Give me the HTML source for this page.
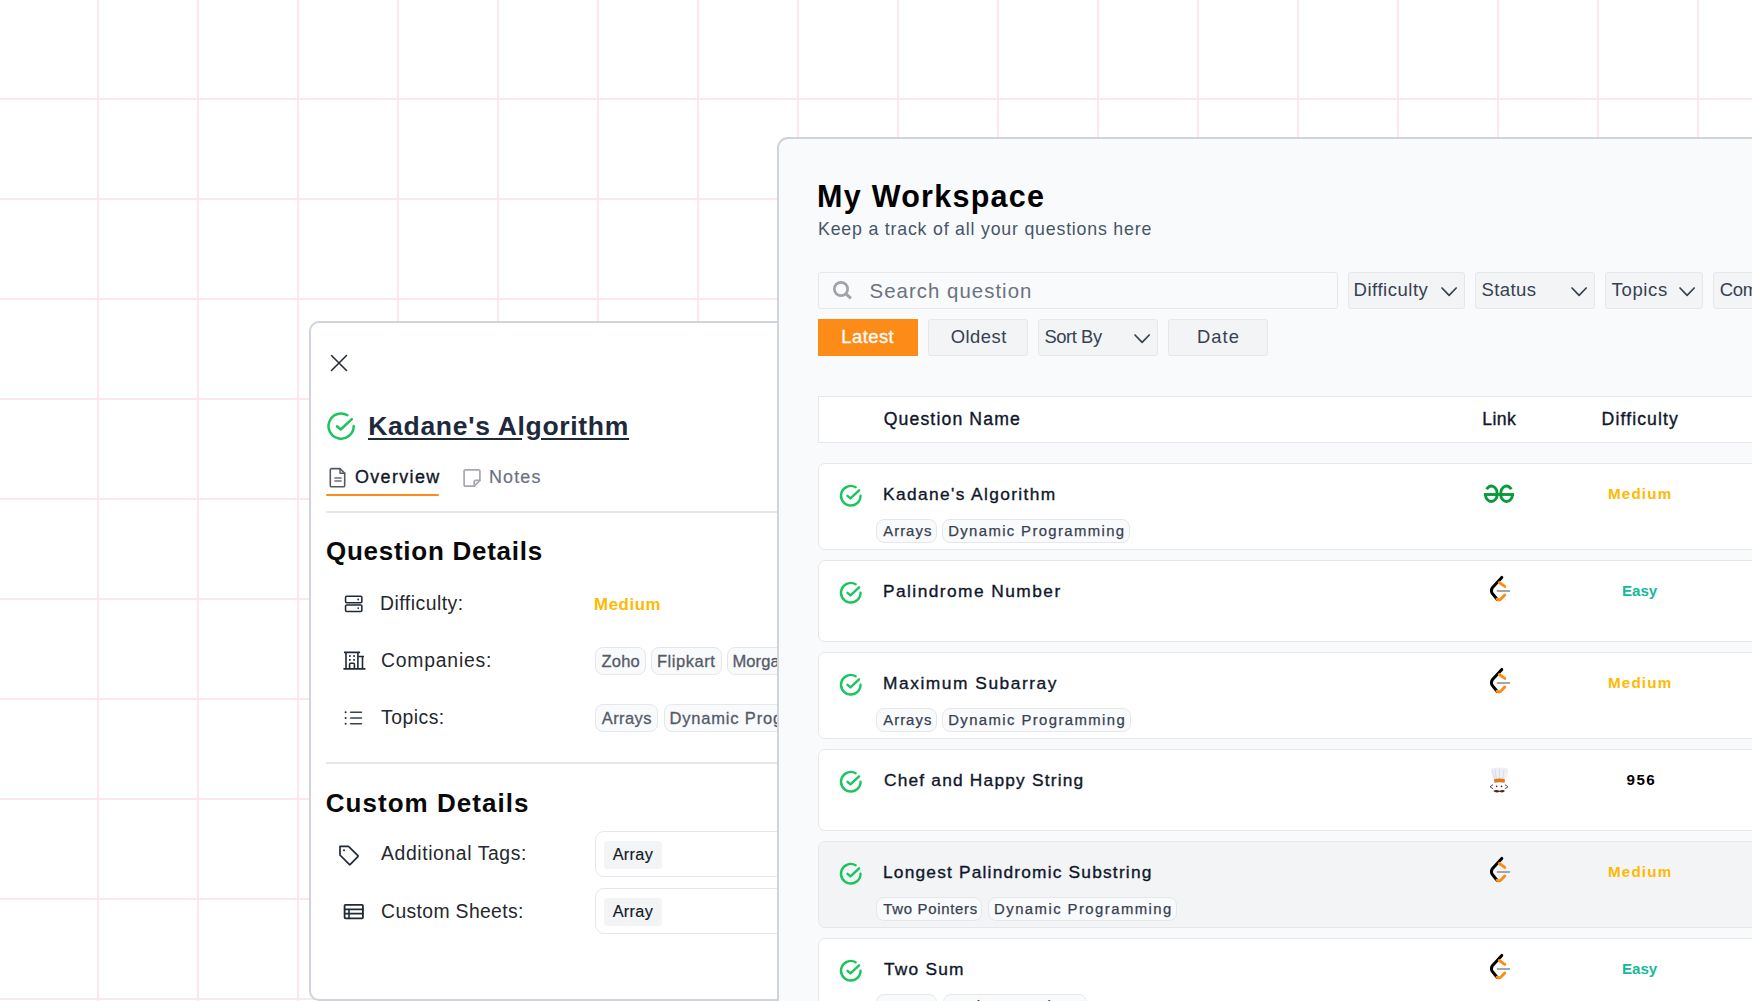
<!DOCTYPE html>
<html><head><meta charset="utf-8"><title>My Workspace</title>
<style>
html,body{margin:0;padding:0;}
body{width:1752px;height:1001px;overflow:hidden;position:relative;background-color:#fff;
background-image:linear-gradient(to right, transparent 97px, #fde7ee 97px, #fde7ee 99px, transparent 99px),
linear-gradient(to bottom, transparent 98px, #fde7ee 98px, #fde7ee 100px, transparent 100px);
background-size:100px 100%, 100% 100px;background-repeat:repeat-x, repeat-y;
font-family:"Liberation Sans", sans-serif;}
.b{position:absolute;}
.i{position:absolute;overflow:visible;}
.t{position:absolute;white-space:pre;line-height:1;font-family:"Liberation Sans", sans-serif;}
#modal,#panel{position:absolute;left:0;top:0;width:1752px;height:1001px;}
</style></head><body>
<div id="modal">
<div class="b" style="left:309px;top:321px;width:700px;height:680px;border:2px solid #cfd4dc;border-radius:10px;background:#fff;box-sizing:border-box"></div>
<svg class="i" style="left:326px;top:350px;" width="26" height="26" viewBox="0 0 26 26" fill="none" stroke-linecap="round" stroke-linejoin="round"><path d="M5.5 5.5 L20.5 20.5 M20.5 5.5 L5.5 20.5" stroke="#272c34" stroke-width="1.55"/></svg>
<svg class="i" style="left:326.38px;top:411.28px;" width="30.24" height="30.24" viewBox="0 0 24 24" fill="none" stroke-linecap="round" stroke-linejoin="round"><path d="M22 12A10 10 0 1 1 17 3.34" stroke="#1bc55d" stroke-width="1.984"/><path d="M8.7 12.1L11.7 14.7L20.5 6.4" stroke="#1bc55d" stroke-width="1.984"/></svg>
<div class="b" style="left:368px;top:437.8px;width:153.5px;height:2px;background:#1e293b"></div>
<div class="b" style="left:540.6px;top:437.8px;width:88.4px;height:2px;background:#1e293b"></div>
<svg class="i" style="left:328px;top:467px;" width="19" height="21" viewBox="0 0 19 21" fill="none" stroke-linecap="round" stroke-linejoin="round"><path d="M2.3 3Q2.3 1.6 3.7 1.6H12L16.7 6.3V18.4Q16.7 19.8 15.3 19.8H3.7Q2.3 19.8 2.3 18.4Z" stroke="#535a64" stroke-width="1.6"/><path d="M12 1.6V6.3H16.7" stroke="#535a64" stroke-width="1.4"/><path d="M7 11H13 M7 14H13" stroke="#6b7079" stroke-width="1.7"/></svg>
<svg class="i" style="left:462px;top:468px;" width="20" height="20" viewBox="0 0 20 20" fill="none" stroke-linecap="round" stroke-linejoin="round"><path d="M12.2 18.2H3.3Q2.1 18.2 2.1 17V3Q2.1 1.8 3.3 1.8H16.7Q17.9 1.8 17.9 3V12.5Z" stroke="#a5a8ad" stroke-width="1.7"/><path d="M12.2 18.2V13.7Q12.2 12.4 13.5 12.4H17.9" stroke="#a5a8ad" stroke-width="1.7"/></svg>
<div class="b" style="left:326px;top:494px;width:113.2px;height:2px;background:#fb8c1a;border-radius:1px"></div>
<div class="b" style="left:326px;top:511px;width:460px;height:2px;background:#e5e7eb"></div>
<div class="b" style="left:326px;top:762px;width:460px;height:2px;background:#e5e7eb"></div>
<svg class="i" style="left:343px;top:594px;" width="21" height="19" viewBox="0 0 21 19" fill="none" stroke-linecap="round" stroke-linejoin="round"><rect x="2.55" y="2.2" width="16.3" height="6.5" rx="1.2" stroke="#1f2937" stroke-width="1.55"/><rect x="2.55" y="10.9" width="16.3" height="6.5" rx="1.2" stroke="#1f2937" stroke-width="1.55"/><circle cx="15.2" cy="5.5" r="0.9" fill="#1f2937"/><circle cx="15.2" cy="14.1" r="0.9" fill="#1f2937"/></svg>
<svg class="i" style="left:340px;top:645px;" width="28" height="28" viewBox="0 0 28 28" fill="none" stroke-linecap="round" stroke-linejoin="round"><path d="M4.2 23.9H24.6 M6 23.9V7.4 M4.8 7.4H19.3 M17.9 7.4V23.9 M17.9 11.5H23.2 M22.5 11.5V23.9 M9.6 23.9V19.3Q9.6 18.3 10.6 18.3H13.4Q14.4 18.3 14.4 19.3V23.9" stroke="#1f2937" stroke-width="1.6" stroke-linecap="square"/><rect x="9" y="10.2" width="1.7" height="1.7" fill="#1f2937"/><rect x="13.2" y="10.2" width="1.7" height="1.7" fill="#1f2937"/><rect x="9" y="14" width="1.7" height="1.7" fill="#1f2937"/><rect x="13.2" y="14" width="1.7" height="1.7" fill="#1f2937"/></svg>
<svg class="i" style="left:342px;top:708px;" width="22" height="20" viewBox="0 0 22 20" fill="none" stroke-linecap="round" stroke-linejoin="round"><path d="M8.6 4.2H19.5 M8.6 10H19.5 M8.6 15.8H19.5" stroke="#374151" stroke-width="1.5"/><circle cx="3.6" cy="4.2" r="1" fill="#1f2937"/><circle cx="3.6" cy="10" r="1" fill="#1f2937"/><circle cx="3.6" cy="15.8" r="1" fill="#1f2937"/></svg>
<div class="b" style="left:595.1px;top:647px;width:50.5px;height:27.7px;background:#f9fafb;border:1px solid #e5e7eb;border-radius:8px;box-sizing:border-box"></div>
<div class="b" style="left:651.0px;top:647px;width:70.5px;height:27.7px;background:#f9fafb;border:1px solid #e5e7eb;border-radius:8px;box-sizing:border-box"></div>
<div class="b" style="left:727.3px;top:647px;width:132.7px;height:27.7px;background:#f9fafb;border:1px solid #e5e7eb;border-radius:8px;box-sizing:border-box"></div>
<div class="b" style="left:595.1px;top:704.3px;width:62.5px;height:27.5px;background:#f9fafb;border:1px solid #e5e7eb;border-radius:8px;box-sizing:border-box"></div>
<div class="b" style="left:663.9px;top:704.3px;width:196.1px;height:27.5px;background:#f9fafb;border:1px solid #e5e7eb;border-radius:8px;box-sizing:border-box"></div>
<svg class="i" style="left:336px;top:842px;" width="26" height="26" viewBox="0 0 26 26" fill="none" stroke-linecap="round" stroke-linejoin="round"><path d="M4 4.4H12.2Q12.6 4.4 13 4.8L21.9 13.6Q22.4 14.1 21.9 14.6L14.3 22.3Q13.8 22.8 13.3 22.3L4.4 13.5Q4 13.1 4 12.7Z" stroke="#1f2937" stroke-width="1.7"/><circle cx="8" cy="8.3" r="1" fill="#1f2937"/></svg>
<svg class="i" style="left:342px;top:902px;" width="23" height="19" viewBox="0 0 23 19" fill="none" stroke-linecap="round" stroke-linejoin="round"><rect x="2.6" y="2.8" width="18.3" height="13.6" rx="0.8" stroke="#1f2937" stroke-width="1.8"/><path d="M2.6 7.4H20.9 M2.6 11.6H20.9 M7 7.4V16.4" stroke="#1f2937" stroke-width="1.6"/></svg>
<div class="b" style="left:595.2px;top:831.2px;width:300px;height:45.6px;border:1px solid #e5e7eb;border-radius:9px;background:#fff;box-sizing:border-box"></div>
<div class="b" style="left:595.2px;top:888.4px;width:300px;height:45.5px;border:1px solid #e5e7eb;border-radius:9px;background:#fff;box-sizing:border-box"></div>
<div class="b" style="left:604.0px;top:841.0px;width:58.2px;height:27.7px;background:#f3f4f6;border-radius:3px"></div>
<div class="b" style="left:604.0px;top:898.0px;width:58.2px;height:27.9px;background:#f3f4f6;border-radius:3px"></div>
<div class="t" style="left:368.30px;top:412.60px;font-size:26.5px;font-weight:700;letter-spacing:0.689px;color:#1e293b;">Kadane's Algorithm</div>
<div class="t" style="left:355.00px;top:469.30px;font-size:17.95px;letter-spacing:1.343px;color:#111827;-webkit-text-stroke:0.35px #111827;">Overview</div>
<div class="t" style="left:488.90px;top:469.30px;font-size:17.95px;letter-spacing:1.178px;color:#6b7280;-webkit-text-stroke:0.2px #6b7280;">Notes</div>
<div class="t" style="left:326.00px;top:538.20px;font-size:26.0px;font-weight:700;letter-spacing:0.734px;color:#0a0a0a;">Question Details</div>
<div class="t" style="left:380.00px;top:594.20px;font-size:19.38px;letter-spacing:0.500px;color:#25282e;">Difficulty:</div>
<div class="t" style="left:594.10px;top:597.20px;font-size:16.8px;font-weight:700;letter-spacing:0.585px;color:#ffb900;">Medium</div>
<div class="t" style="left:380.90px;top:650.60px;font-size:19.38px;letter-spacing:0.809px;color:#25282e;">Companies:</div>
<div class="t" style="left:381.10px;top:708.00px;font-size:19.38px;letter-spacing:0.471px;color:#25282e;">Topics:</div>
<div class="t" style="left:601.50px;top:654.00px;font-size:16.52px;letter-spacing:0.214px;color:#545b68;-webkit-text-stroke:0.3px #545b68;">Zoho</div>
<div class="t" style="left:657.00px;top:654.00px;font-size:16.52px;letter-spacing:0.535px;color:#545b68;-webkit-text-stroke:0.3px #545b68;">Flipkart</div>
<div class="t" style="left:732.50px;top:654.00px;font-size:16.52px;letter-spacing:0.083px;color:#545b68;-webkit-text-stroke:0.3px #545b68;">Morgan Stanley</div>
<div class="t" style="left:601.70px;top:710.80px;font-size:16.52px;letter-spacing:0.428px;color:#545b68;-webkit-text-stroke:0.3px #545b68;">Arrays</div>
<div class="t" style="left:669.40px;top:710.80px;font-size:16.52px;letter-spacing:0.824px;color:#545b68;-webkit-text-stroke:0.3px #545b68;">Dynamic Programming</div>
<div class="t" style="left:325.70px;top:789.70px;font-size:26.0px;font-weight:700;letter-spacing:1.046px;color:#0a0a0a;">Custom Details</div>
<div class="t" style="left:381.10px;top:844.00px;font-size:19.38px;letter-spacing:0.593px;color:#25282e;">Additional Tags:</div>
<div class="t" style="left:381.10px;top:901.50px;font-size:19.38px;letter-spacing:0.350px;color:#25282e;">Custom Sheets:</div>
<div class="t" style="left:612.70px;top:845.70px;font-size:16.32px;letter-spacing:0.296px;color:#111827;-webkit-text-stroke:0.15px #111827;">Array</div>
<div class="t" style="left:612.70px;top:902.80px;font-size:16.32px;letter-spacing:0.296px;color:#111827;-webkit-text-stroke:0.15px #111827;">Array</div>
</div>
<div id="panel">
<div class="b" style="left:777px;top:137px;width:1100px;height:1000px;border:2px solid #cfd4dc;border-radius:11px;background:#f9fafb;box-sizing:border-box"></div>
<div class="b" style="left:818px;top:272px;width:520px;height:37px;border:1px solid #e5e7eb;border-radius:3px;background:#f9fafb;box-sizing:border-box"></div>
<svg class="i" style="left:831px;top:279px;" width="24" height="24" viewBox="0 0 24 24" fill="none" stroke-linecap="round" stroke-linejoin="round"><circle cx="10" cy="10" r="6.65" stroke="#a0a3a8" stroke-width="2.7"/><path d="M14.6 14.6L19.9 19.4" stroke="#a0a3a8" stroke-width="3.1" stroke-linecap="butt"/></svg>
<div class="b" style="left:1348px;top:272px;width:117px;height:37px;background:#f3f4f6;border:1px solid #e5e7eb;border-radius:3px;box-sizing:border-box"></div>
<svg class="i" style="left:1439.9px;top:285.8px;" width="18.2" height="11.4" viewBox="0 0 18.2 11.4" fill="none" stroke-linecap="round" stroke-linejoin="round"><path d="M2 2L9.1 9.4L16.2 2" stroke="#374151" stroke-width="1.7"/></svg>
<div class="b" style="left:1475px;top:272px;width:120px;height:37px;background:#f3f4f6;border:1px solid #e5e7eb;border-radius:3px;box-sizing:border-box"></div>
<svg class="i" style="left:1569.7px;top:285.8px;" width="18.2" height="11.4" viewBox="0 0 18.2 11.4" fill="none" stroke-linecap="round" stroke-linejoin="round"><path d="M2 2L9.1 9.4L16.2 2" stroke="#374151" stroke-width="1.7"/></svg>
<div class="b" style="left:1605px;top:272px;width:98px;height:37px;background:#f3f4f6;border:1px solid #e5e7eb;border-radius:3px;box-sizing:border-box"></div>
<svg class="i" style="left:1677.8px;top:285.8px;" width="18.2" height="11.4" viewBox="0 0 18.2 11.4" fill="none" stroke-linecap="round" stroke-linejoin="round"><path d="M2 2L9.1 9.4L16.2 2" stroke="#374151" stroke-width="1.7"/></svg>
<div class="b" style="left:1713px;top:272px;width:187px;height:37px;background:#f3f4f6;border:1px solid #e5e7eb;border-radius:3px;box-sizing:border-box"></div>
<div class="b" style="left:818px;top:319px;width:100px;height:37px;background:#fd8b17"></div>
<div class="b" style="left:928px;top:319px;width:100px;height:37px;background:#f3f4f6;border:1px solid #e5e7eb;border-radius:3px;box-sizing:border-box"></div>
<div class="b" style="left:1038px;top:319px;width:120px;height:37px;background:#f3f4f6;border:1px solid #e5e7eb;border-radius:3px;box-sizing:border-box"></div>
<svg class="i" style="left:1133px;top:333px;" width="18.2" height="11.4" viewBox="0 0 18.2 11.4" fill="none" stroke-linecap="round" stroke-linejoin="round"><path d="M2 2L9.1 9.4L16.2 2" stroke="#374151" stroke-width="1.7"/></svg>
<div class="b" style="left:1168px;top:319px;width:100px;height:37px;background:#f3f4f6;border:1px solid #e5e7eb;border-radius:3px;box-sizing:border-box"></div>
<div class="b" style="left:818px;top:396px;width:1000px;height:47px;background:#fff;border:1px solid #e5e7eb;box-sizing:border-box"></div>
<div class="b" style="left:818px;top:463px;width:1000px;height:87px;background:#ffffff;border:1px solid #e5e7eb;border-radius:7px;box-sizing:border-box"></div>
<svg class="i" style="left:839.44px;top:483.74px;" width="23.52" height="23.52" viewBox="0 0 24 24" fill="none" stroke-linecap="round" stroke-linejoin="round"><path d="M22 12A10 10 0 1 1 17 3.34" stroke="#1bc55d" stroke-width="2.449"/><path d="M8.7 12.1L11.7 14.7L20.5 6.4" stroke="#1bc55d" stroke-width="2.449"/></svg>
<div class="b" style="left:818px;top:560px;width:1000px;height:82px;background:#ffffff;border:1px solid #e5e7eb;border-radius:7px;box-sizing:border-box"></div>
<svg class="i" style="left:839.44px;top:580.74px;" width="23.52" height="23.52" viewBox="0 0 24 24" fill="none" stroke-linecap="round" stroke-linejoin="round"><path d="M22 12A10 10 0 1 1 17 3.34" stroke="#1bc55d" stroke-width="2.449"/><path d="M8.7 12.1L11.7 14.7L20.5 6.4" stroke="#1bc55d" stroke-width="2.449"/></svg>
<div class="b" style="left:818px;top:652px;width:1000px;height:87px;background:#ffffff;border:1px solid #e5e7eb;border-radius:7px;box-sizing:border-box"></div>
<svg class="i" style="left:839.44px;top:672.74px;" width="23.52" height="23.52" viewBox="0 0 24 24" fill="none" stroke-linecap="round" stroke-linejoin="round"><path d="M22 12A10 10 0 1 1 17 3.34" stroke="#1bc55d" stroke-width="2.449"/><path d="M8.7 12.1L11.7 14.7L20.5 6.4" stroke="#1bc55d" stroke-width="2.449"/></svg>
<div class="b" style="left:818px;top:749px;width:1000px;height:82px;background:#ffffff;border:1px solid #e5e7eb;border-radius:7px;box-sizing:border-box"></div>
<svg class="i" style="left:839.44px;top:769.74px;" width="23.52" height="23.52" viewBox="0 0 24 24" fill="none" stroke-linecap="round" stroke-linejoin="round"><path d="M22 12A10 10 0 1 1 17 3.34" stroke="#1bc55d" stroke-width="2.449"/><path d="M8.7 12.1L11.7 14.7L20.5 6.4" stroke="#1bc55d" stroke-width="2.449"/></svg>
<div class="b" style="left:818px;top:841px;width:1000px;height:87px;background:#f3f4f6;border:1px solid #e5e7eb;border-radius:7px;box-sizing:border-box"></div>
<svg class="i" style="left:839.44px;top:861.74px;" width="23.52" height="23.52" viewBox="0 0 24 24" fill="none" stroke-linecap="round" stroke-linejoin="round"><path d="M22 12A10 10 0 1 1 17 3.34" stroke="#1bc55d" stroke-width="2.449"/><path d="M8.7 12.1L11.7 14.7L20.5 6.4" stroke="#1bc55d" stroke-width="2.449"/></svg>
<div class="b" style="left:818px;top:938px;width:1000px;height:92px;background:#ffffff;border:1px solid #e5e7eb;border-radius:7px;box-sizing:border-box"></div>
<svg class="i" style="left:839.44px;top:958.74px;" width="23.52" height="23.52" viewBox="0 0 24 24" fill="none" stroke-linecap="round" stroke-linejoin="round"><path d="M22 12A10 10 0 1 1 17 3.34" stroke="#1bc55d" stroke-width="2.449"/><path d="M8.7 12.1L11.7 14.7L20.5 6.4" stroke="#1bc55d" stroke-width="2.449"/></svg>
<div class="b" style="left:876.4px;top:519.3px;width:60.3px;height:24.2px;background:#f9fafb;border:1px solid #e5e7eb;border-radius:8px;box-sizing:border-box"></div>
<div class="b" style="left:942.4px;top:519.3px;width:187.2px;height:24.2px;background:#f9fafb;border:1px solid #e5e7eb;border-radius:8px;box-sizing:border-box"></div>
<div class="b" style="left:876.4px;top:708.3px;width:60.3px;height:24.2px;background:#f9fafb;border:1px solid #e5e7eb;border-radius:8px;box-sizing:border-box"></div>
<div class="b" style="left:942.4px;top:708.3px;width:188.3px;height:24.2px;background:#f9fafb;border:1px solid #e5e7eb;border-radius:8px;box-sizing:border-box"></div>
<div class="b" style="left:876.4px;top:897.3px;width:105.7px;height:24.2px;background:#f9fafb;border:1px solid #e5e7eb;border-radius:8px;box-sizing:border-box"></div>
<div class="b" style="left:988.3px;top:897.3px;width:188.4px;height:24.2px;background:#f9fafb;border:1px solid #e5e7eb;border-radius:8px;box-sizing:border-box"></div>
<div class="b" style="left:876.4px;top:994.3px;width:60.3px;height:24.2px;background:#f9fafb;border:1px solid #e5e7eb;border-radius:8px;box-sizing:border-box"></div>
<div class="b" style="left:943.0px;top:994.3px;width:144.0px;height:24.2px;background:#f9fafb;border:1px solid #e5e7eb;border-radius:8px;box-sizing:border-box"></div>
<svg class="i" style="left:1483px;top:484px;" width="32" height="20" viewBox="0 0 32 20" fill="none" stroke-linecap="round" stroke-linejoin="round"><path d="M3.6 5.3A5.85 8.05 0 0 1 14.15 10.5A5.85 6.95 0 0 1 2.45 10.5" stroke="#0a9a3a" stroke-width="2.9" stroke-linecap="butt"/><path d="M28.3 5.3A5.85 8.05 0 0 0 17.75 10.5A5.85 6.95 0 0 0 29.45 10.5" stroke="#0a9a3a" stroke-width="2.9" stroke-linecap="butt"/><path d="M0.9 10.5H31" stroke="#0a9a3a" stroke-width="2.9" stroke-linecap="butt"/></svg>
<svg class="i" style="left:1482px;top:572.1px;" width="32" height="32" viewBox="0 0 32 32" fill="none" stroke-linecap="round" stroke-linejoin="round"><path d="M19.8 5.4L10.3 15.8Q8.6 18.8 10.3 21.4L15 27.2" stroke="#000" stroke-width="3"/><path d="M17.3 10.5L22.8 14.4" stroke="#fb8c16" stroke-width="2.9"/><path d="M15 27.2Q17.2 28.8 19.2 26.8L22.8 23" stroke="#fb8c16" stroke-width="2.9"/><path d="M15.7 19H27.2" stroke="#a3a5a8" stroke-width="2.2"/></svg>
<svg class="i" style="left:1482px;top:664.1px;" width="32" height="32" viewBox="0 0 32 32" fill="none" stroke-linecap="round" stroke-linejoin="round"><path d="M19.8 5.4L10.3 15.8Q8.6 18.8 10.3 21.4L15 27.2" stroke="#000" stroke-width="3"/><path d="M17.3 10.5L22.8 14.4" stroke="#fb8c16" stroke-width="2.9"/><path d="M15 27.2Q17.2 28.8 19.2 26.8L22.8 23" stroke="#fb8c16" stroke-width="2.9"/><path d="M15.7 19H27.2" stroke="#a3a5a8" stroke-width="2.2"/></svg>
<svg class="i" style="left:1489px;top:767px;" width="21" height="27" viewBox="0 0 21 27" fill="none" stroke-linecap="round" stroke-linejoin="round"><path d="M2 3.2Q2 0.8 5 0.7H15.5Q19.3 0.8 19.3 4Q19 9 15.3 12.5H5.3Q2.3 9 2 3.2Z" fill="#eef0f3"/><path d="M6 2.5L7.2 11.5M10.5 2V11.5M15 2.5L13.8 11.5M3.5 4Q4.5 9 6 12" stroke="#d3d7de" stroke-width="0.8"/><path d="M5 12.3Q10.5 10.8 16 12.3L15.7 15.8Q10.5 14.6 5.4 15.8Z" fill="#e07a22"/><path d="M3.8 17.8L1 19.8L3.8 21.6M16.2 17.8L19 19.8L16.2 21.6" stroke="#444" stroke-width="0.9"/><circle cx="7.6" cy="19.4" r="0.8" fill="#4a2428"/><circle cx="12.6" cy="19.4" r="0.8" fill="#4a2428"/><path d="M4.2 24Q7 22.2 10.5 23.8Q14 22.2 16 24Q14 26.3 10.5 24.8Q7 26.3 4.2 24Z" fill="#5a1f24"/></svg>
<svg class="i" style="left:1482px;top:853.1px;" width="32" height="32" viewBox="0 0 32 32" fill="none" stroke-linecap="round" stroke-linejoin="round"><path d="M19.8 5.4L10.3 15.8Q8.6 18.8 10.3 21.4L15 27.2" stroke="#000" stroke-width="3"/><path d="M17.3 10.5L22.8 14.4" stroke="#fb8c16" stroke-width="2.9"/><path d="M15 27.2Q17.2 28.8 19.2 26.8L22.8 23" stroke="#fb8c16" stroke-width="2.9"/><path d="M15.7 19H27.2" stroke="#a3a5a8" stroke-width="2.2"/></svg>
<svg class="i" style="left:1482px;top:950.1px;" width="32" height="32" viewBox="0 0 32 32" fill="none" stroke-linecap="round" stroke-linejoin="round"><path d="M19.8 5.4L10.3 15.8Q8.6 18.8 10.3 21.4L15 27.2" stroke="#000" stroke-width="3"/><path d="M17.3 10.5L22.8 14.4" stroke="#fb8c16" stroke-width="2.9"/><path d="M15 27.2Q17.2 28.8 19.2 26.8L22.8 23" stroke="#fb8c16" stroke-width="2.9"/><path d="M15.7 19H27.2" stroke="#a3a5a8" stroke-width="2.2"/></svg>
<div class="t" style="left:817.00px;top:181.30px;font-size:30.5px;font-weight:700;letter-spacing:1.267px;color:#000000;">My Workspace</div>
<div class="t" style="left:818.00px;top:220.80px;font-size:17.75px;letter-spacing:0.799px;color:#475569;">Keep a track of all your questions here</div>
<div class="t" style="left:869.60px;top:281.00px;font-size:20.4px;letter-spacing:1.027px;color:#6b7280;">Search question</div>
<div class="t" style="left:1353.50px;top:280.80px;font-size:18.56px;letter-spacing:0.515px;color:#374151;">Difficulty</div>
<div class="t" style="left:1481.60px;top:280.80px;font-size:18.56px;letter-spacing:0.359px;color:#374151;">Status</div>
<div class="t" style="left:1611.60px;top:280.80px;font-size:18.56px;letter-spacing:0.621px;color:#374151;">Topics</div>
<div class="t" style="left:1719.80px;top:280.80px;font-size:18.56px;letter-spacing:-0.417px;color:#374151;">Companies</div>
<div class="t" style="left:841.30px;top:327.80px;font-size:18.36px;letter-spacing:0.478px;color:#ffffff;-webkit-text-stroke:0.3px #ffffff;">Latest</div>
<div class="t" style="left:950.70px;top:327.80px;font-size:18.36px;letter-spacing:0.508px;color:#374151;">Oldest</div>
<div class="t" style="left:1044.40px;top:327.80px;font-size:18.36px;letter-spacing:-0.420px;color:#374151;">Sort By</div>
<div class="t" style="left:1196.90px;top:327.80px;font-size:18.36px;letter-spacing:1.077px;color:#374151;">Date</div>
<div class="t" style="left:883.70px;top:410.70px;font-size:17.65px;letter-spacing:1.129px;color:#0f172a;-webkit-text-stroke:0.35px #0f172a;">Question Name</div>
<div class="t" style="left:1482.30px;top:411.00px;font-size:17.65px;letter-spacing:0.386px;color:#0f172a;-webkit-text-stroke:0.35px #0f172a;">Link</div>
<div class="t" style="left:1601.60px;top:411.00px;font-size:17.65px;letter-spacing:1.099px;color:#0f172a;-webkit-text-stroke:0.35px #0f172a;">Difficulty</div>
<div class="t" style="left:883.00px;top:485.90px;font-size:17.34px;letter-spacing:1.377px;color:#0f172a;-webkit-text-stroke:0.35px #0f172a;">Kadane's Algorithm</div>
<div class="t" style="left:883.00px;top:582.90px;font-size:17.34px;letter-spacing:1.442px;color:#0f172a;-webkit-text-stroke:0.35px #0f172a;">Palindrome Number</div>
<div class="t" style="left:883.00px;top:674.90px;font-size:17.34px;letter-spacing:1.550px;color:#0f172a;-webkit-text-stroke:0.35px #0f172a;">Maximum Subarray</div>
<div class="t" style="left:884.00px;top:771.90px;font-size:17.34px;letter-spacing:1.191px;color:#0f172a;-webkit-text-stroke:0.35px #0f172a;">Chef and Happy String</div>
<div class="t" style="left:883.00px;top:863.90px;font-size:17.34px;letter-spacing:1.190px;color:#0f172a;-webkit-text-stroke:0.35px #0f172a;">Longest Palindromic Substring</div>
<div class="t" style="left:884.00px;top:960.90px;font-size:17.34px;letter-spacing:1.202px;color:#0f172a;-webkit-text-stroke:0.35px #0f172a;">Two Sum</div>
<div class="t" style="left:1608.00px;top:486.10px;font-size:15.2px;font-weight:700;letter-spacing:1.166px;color:#ffb900;">Medium</div>
<div class="t" style="left:1622.00px;top:583.10px;font-size:15.2px;font-weight:700;letter-spacing:-0.074px;color:#16b99b;">Easy</div>
<div class="t" style="left:1608.00px;top:675.10px;font-size:15.2px;font-weight:700;letter-spacing:1.166px;color:#ffb900;">Medium</div>
<div class="t" style="left:1626.50px;top:772.10px;font-size:15.2px;font-weight:700;letter-spacing:1.453px;color:#000000;">956</div>
<div class="t" style="left:1608.00px;top:864.10px;font-size:15.2px;font-weight:700;letter-spacing:1.166px;color:#ffb900;">Medium</div>
<div class="t" style="left:1622.00px;top:961.10px;font-size:15.2px;font-weight:700;letter-spacing:-0.074px;color:#16b99b;">Easy</div>
<div class="t" style="left:883.20px;top:524.00px;font-size:14.89px;letter-spacing:1.032px;color:#374151;-webkit-text-stroke:0.25px #374151;">Arrays</div>
<div class="t" style="left:948.20px;top:524.00px;font-size:14.89px;letter-spacing:1.367px;color:#374151;-webkit-text-stroke:0.25px #374151;">Dynamic Programming</div>
<div class="t" style="left:883.20px;top:713.00px;font-size:14.89px;letter-spacing:1.032px;color:#374151;-webkit-text-stroke:0.25px #374151;">Arrays</div>
<div class="t" style="left:948.20px;top:713.00px;font-size:14.89px;letter-spacing:1.406px;color:#374151;-webkit-text-stroke:0.25px #374151;">Dynamic Programming</div>
<div class="t" style="left:883.30px;top:902.00px;font-size:14.89px;letter-spacing:0.723px;color:#374151;-webkit-text-stroke:0.25px #374151;">Two Pointers</div>
<div class="t" style="left:994.10px;top:902.00px;font-size:14.89px;letter-spacing:1.439px;color:#374151;-webkit-text-stroke:0.25px #374151;">Dynamic Programming</div>
<div class="t" style="left:883.20px;top:999.00px;font-size:14.89px;letter-spacing:1.032px;color:#374151;-webkit-text-stroke:0.25px #374151;">Arrays</div>
<div class="t" style="left:948.80px;top:999.00px;font-size:14.89px;letter-spacing:0.475px;color:#374151;-webkit-text-stroke:0.25px #374151;">Hash Map and Set</div>
</div>
</body></html>
